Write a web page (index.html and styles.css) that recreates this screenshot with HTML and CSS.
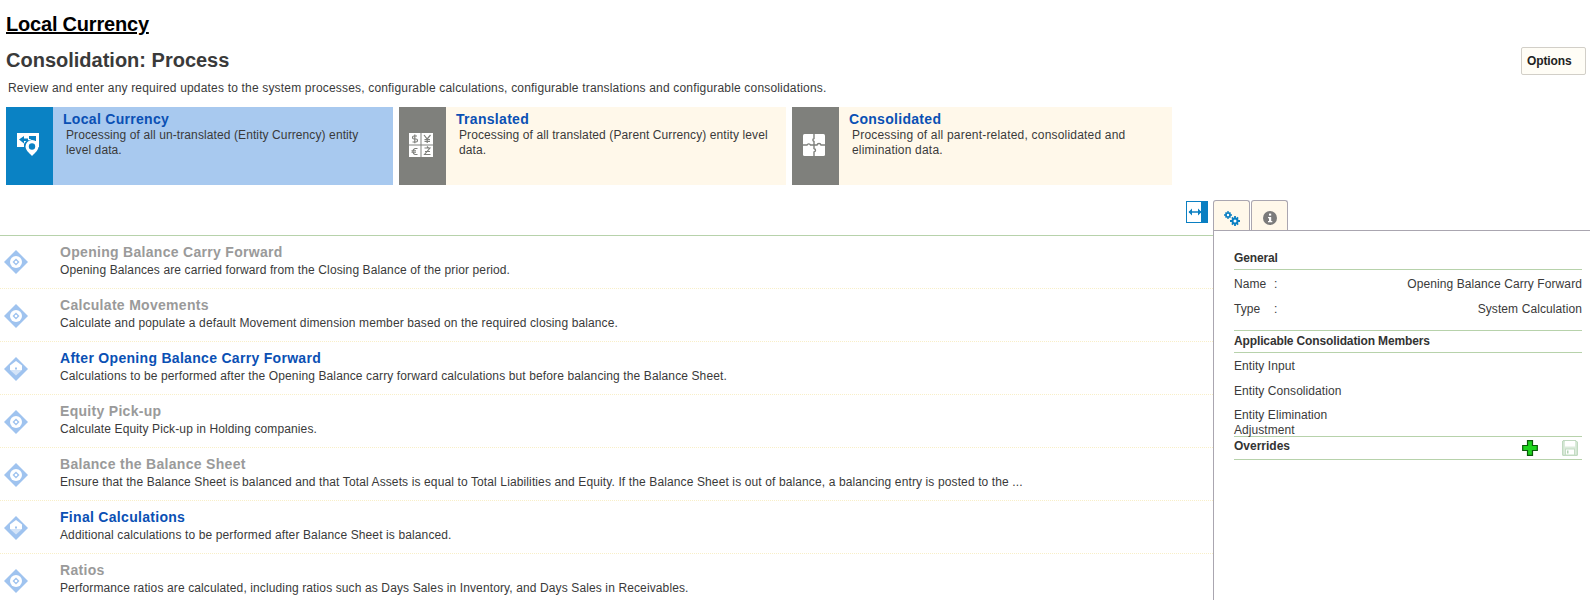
FILE: index.html
```html
<!DOCTYPE html>
<html lang="en">
<head>
<meta charset="utf-8">
<title>Local Currency</title>
<link rel="stylesheet" href="styles.css">
</head>
<body>
<svg class="defs" width="0" height="0" aria-hidden="true">
  <symbol id="dia-off" viewBox="0 0 24 24">
    <path d="M12 0 24 12 12 24 0 12Z" fill="#9fc3ef"/>
    <circle cx="12" cy="12" r="6" fill="#fff"/>
    <path d="M12 8.5 15.5 12 12 15.5 8.5 12Z" fill="#9fc3ef"/>
    <circle cx="12" cy="12" r="1.3" fill="#fff"/>
  </symbol>
  <symbol id="dia-on" viewBox="0 0 24 24">
    <path d="M12 0 24 12 12 24 0 12Z" fill="#9fc3ef"/>
    <path d="M12 4 18 8.5V13H6V8.5Z" fill="#fff"/>
    <path d="M6 13H18L12 18.5Z" fill="#d4e4f8"/>
    <rect x="11" y="10.5" width="2" height="2" fill="#9fc3ef"/>
  </symbol>
</svg>

<h1 class="page-title">Local Currency</h1>
<div class="head-row">
  <h2 class="section-title">Consolidation: Process</h2>
  <button class="options">Options</button>
</div>
<p class="intro">Review and enter any required updates to the system processes, configurable calculations, configurable translations and configurable consolidations.</p>

<div class="cards">
  <div class="card card-active">
    <div class="card-icon icon-blue">
      <svg width="22" height="23" viewBox="0 0 22 23">
        <path d="M0 0H22V14H19V11A6.5 6.5 0 0 0 7 11V14H0Z" fill="#fff"/>
        <path d="M2 6.5 7 3V5.5H11V8H7V10.5Z" fill="#0a82c4"/>
        <path d="M12 3H19V8H16L13 6H12Z" fill="#0a82c4"/>
        <path d="M15 7A6.5 6.5 0 0 1 21.500 13.500C21.500 17 18 20 15 23 12 20 8.500 17 8.500 13.500A6.500 6.500 0 0 1 15 7Z" fill="#fff"/>
        <circle cx="15" cy="13.500" r="3.200" fill="#0a82c4"/>
      </svg>
    </div>
    <div class="card-body">
      <div class="card-title">Local Currency</div>
      <div class="card-text w1">Processing of all un-translated (Entity Currency) entity level data.</div>
    </div>
  </div>
  <div class="card">
    <div class="card-icon icon-gray">
      <svg width="24" height="24" viewBox="0 0 24 24">
        <rect x="0" y="0" width="11.5" height="11.5" fill="#fff"/>
        <rect x="12.5" y="0" width="11.5" height="11.5" fill="#fff"/>
        <rect x="0" y="12.5" width="11.5" height="11.5" fill="#fff"/>
        <rect x="12.5" y="12.5" width="11.5" height="11.5" fill="#fff"/>
        <path d="M8 3H5A1.5 1.5 0 0 0 5 6H7A1.5 1.5 0 0 1 7 9H3.5M5.800 1.500V10.200" fill="none" stroke="#7f807c" stroke-width="1.200"/>
        <path d="M15 2 18.200 6 21.500 2M18.200 6V10M15.500 6.500H21M15.500 8.300H21" fill="none" stroke="#7f807c" stroke-width="1.200"/>
        <path d="M8.500 15.500H6A3.200 3.200 0 0 0 6 21.500H8.500M2.500 17.800H7M2.500 19.300H7" fill="none" stroke="#7f807c" stroke-width="1.100"/>
        <path d="M15.500 15H21L15.500 21.500H21.500M16 18.500H21M18 13.500 19.500 15" fill="none" stroke="#7f807c" stroke-width="1.100"/>
      </svg>
    </div>
    <div class="card-body">
      <div class="card-title">Translated</div>
      <div class="card-text w2">Processing of all translated (Parent Currency) entity level data.</div>
    </div>
  </div>
  <div class="card card-last">
    <div class="card-icon icon-gray">
      <svg width="22" height="22" viewBox="0 0 22 22">
        <rect width="22" height="22" rx="1.500" fill="#fff"/>
        <path d="M11 0V4.500C9.500 5 9.500 7 11 7.500V11M11 11H7.500C7 9.500 4.500 9.500 4 11H0M11 11H14C14.500 9 17.500 9 18 11H22M11 11V14.500C13 15 13 17.500 11 18V22" fill="none" stroke="#7f807c" stroke-width="1.400"/>
      </svg>
    </div>
    <div class="card-body">
      <div class="card-title">Consolidated</div>
      <div class="card-text w3">Processing of all parent-related, consolidated and elimination data.</div>
    </div>
  </div>
</div>

<div class="main">
  <div class="left">
    <div class="toolbar">
      <div class="toggle">
        <svg width="14" height="8" viewBox="0 0 14 8">
          <path d="M1 4H13" stroke="#0a7fc2" stroke-width="1.500"/>
          <path d="M4 0.500V7.500L0.500 4ZM10 0.500V7.500L13.500 4Z" fill="#0a7fc2"/>
        </svg>
      </div>
    </div>
    <ul class="rows">
      <li class="row row-first">
        <svg class="dia" width="24" height="24"><use href="#dia-off"/></svg>
        <div><div class="row-title off">Opening Balance Carry Forward</div>
        <div class="row-text">Opening Balances are carried forward from the Closing Balance of the prior period.</div></div>
      </li>
      <li class="row">
        <svg class="dia" width="24" height="24"><use href="#dia-off"/></svg>
        <div><div class="row-title off">Calculate Movements</div>
        <div class="row-text">Calculate and populate a default Movement dimension member based on the required closing balance.</div></div>
      </li>
      <li class="row">
        <svg class="dia" width="24" height="24"><use href="#dia-on"/></svg>
        <div><div class="row-title">After Opening Balance Carry Forward</div>
        <div class="row-text">Calculations to be performed after the Opening Balance carry forward calculations but before balancing the Balance Sheet.</div></div>
      </li>
      <li class="row">
        <svg class="dia" width="24" height="24"><use href="#dia-off"/></svg>
        <div><div class="row-title off">Equity Pick-up</div>
        <div class="row-text">Calculate Equity Pick-up in Holding companies.</div></div>
      </li>
      <li class="row">
        <svg class="dia" width="24" height="24"><use href="#dia-off"/></svg>
        <div><div class="row-title off">Balance the Balance Sheet</div>
        <div class="row-text">Ensure that the Balance Sheet is balanced and that Total Assets is equal to Total Liabilities and Equity. If the Balance Sheet is out of balance, a balancing entry is posted to the ...</div></div>
      </li>
      <li class="row">
        <svg class="dia" width="24" height="24"><use href="#dia-on"/></svg>
        <div><div class="row-title">Final Calculations</div>
        <div class="row-text">Additional calculations to be performed after Balance Sheet is balanced.</div></div>
      </li>
      <li class="row">
        <svg class="dia" width="24" height="24"><use href="#dia-off"/></svg>
        <div><div class="row-title off">Ratios</div>
        <div class="row-text">Performance ratios are calculated, including ratios such as Days Sales in Inventory, and Days Sales in Receivables.</div></div>
      </li>
    </ul>
  </div>

  <div class="right">
    <div class="tabs">
      <div class="tab">
        <svg width="16" height="15" viewBox="0 0 16 15">
          <g fill="#0a7fc2">
            <circle cx="4" cy="4" r="2.800"/>
            <path d="M3.300 0H4.700V8H3.300ZM0 3.300H8V4.700H0ZM1 2 2 1 7 6 6 7ZM6 1 7 2 2 7 1 6Z"/>
            <circle cx="11" cy="10" r="3.500"/>
            <path d="M10.100 5H11.900V15H10.100ZM6 9.100H16V10.900H6ZM7.300 7 8.500 5.800 14.700 13 13.500 14.200ZM13.500 5.800 14.700 7 8.500 14.200 7.300 13Z"/>
          </g>
          <circle cx="4" cy="4" r="1.200" fill="#fff"/>
          <circle cx="11" cy="10" r="1.500" fill="#fff"/>
        </svg>
      </div>
      <div class="tab">
        <svg width="14" height="14" viewBox="0 0 14 14">
          <circle cx="7" cy="7" r="7" fill="#7b7b7b"/>
          <rect x="6" y="2.600" width="2.200" height="2" fill="#fff"/>
          <path d="M5 6H8.200V10H9.300V11.200H5V10H6V7.200H5Z" fill="#fff"/>
        </svg>
      </div>
    </div>
    <div class="panel">
      <div class="panel-head first">General</div>
      <div class="prop"><span class="prop-key">Name</span><span class="prop-colon">:</span><span class="prop-val">Opening Balance Carry Forward</span></div>
      <div class="prop prop-2"><span class="prop-key">Type</span><span class="prop-colon">:</span><span class="prop-val">System Calculation</span></div>
      <div class="panel-head apps">Applicable Consolidation Members</div>
      <div class="member member-first">Entity Input</div>
      <div class="member">Entity Consolidation</div>
      <div class="member wrap">Entity Elimination Adjustment</div>
      <div class="panel-head overrides">
        <span>Overrides</span>
        <span class="actions">
          <svg width="16" height="16" viewBox="0 0 16 16">
            <path d="M5.500 0.700H10.500V5.500H15.300V10.500H10.500V15.300H5.500V10.500H0.700V5.500H5.500Z" fill="#1fd41f" stroke="#0a5c0a" stroke-width="1.200"/>
          </svg>
          <svg width="16" height="16" viewBox="0 0 16 16">
            <path d="M1 .7H14L15.300 2V15.300H.7V1Z" fill="#dcebdc" stroke="#b4d2b4"/>
            <rect x="3" y="1" width="10" height="5.500" fill="#fff"/>
            <rect x="3.500" y="9" width="9" height="6" fill="#fff" stroke="#c4dcc4"/>
            <rect x="5" y="10.500" width="1.500" height="3" fill="#b4d2b4"/>
          </svg>
        </span>
      </div>
    </div>
  </div>
</div>
</body>
</html>
```
FILE: styles.css
```css
* { box-sizing: border-box; }
html, body { margin: 0; padding: 0; height: 600px; overflow: hidden; background: #fff; }
body { font-family: "Liberation Sans", Arial, sans-serif; font-size: 12px; color: #3a3a3a; }
.defs { display: block; height: 0; }

.page-title { margin: 0; padding: 13px 0 0 6px; font-size: 20px; line-height: 23px; font-weight: 700; color: #000; text-decoration: underline; letter-spacing: -0.2px; }

.head-row { display: flex; justify-content: space-between; align-items: flex-start; padding: 10px 4px 0 6px; height: 49px; margin-top: -3px; }
.section-title { margin: 0; padding-top: 5px; font-size: 20px; line-height: 24px; font-weight: 700; color: #3a3a3a; }
.options { width: 65px; height: 28px; padding: 0 0 0 5px; margin-top: 4px; text-align: left; font: 700 12px "Liberation Sans", Arial, sans-serif; letter-spacing: -0.1px; color: #222; background: #fffdf6; border: 1px solid #d2cfc8; border-radius: 2px; }

.intro { margin: -1px 0 0; padding-left: 8px; line-height: 15px; letter-spacing: 0.18px; }

.cards { display: flex; gap: 6px; margin: 11px 0 0 6px; height: 78px; }
.card { display: flex; width: 387px; height: 78px; background: #fff8ea; }
.card-active { background: #a8c9ef; }
.card-last { width: 380px; }
.card-icon { flex: none; width: 47px; display: flex; align-items: center; justify-content: center; padding: 0 3px 3px 0; }
.icon-blue { background: #0a82c4; }
.icon-gray { background: #7f807c; }
.card-body { padding: 4px 0 0 10px; }
.card-title { font-size: 14px; line-height: 17px; font-weight: 700; color: #0a50b4; letter-spacing: 0.3px; }
.card-text { margin-left: 3px; line-height: 15px; color: #3a3a3a; letter-spacing: 0.1px; }
.w1 { width: 305px; }
.w2 { width: 320px; }
.w3 { width: 300px; letter-spacing: 0.2px; }

.main { display: flex; margin-top: 15px; }
.left { width: 1213px; flex: none; }
.toolbar { height: 36px; border-bottom: 1px solid #b7d2ab; display: flex; justify-content: flex-end; padding: 1px 5px 0 0; }
.toggle { width: 22px; height: 22px; background: linear-gradient(to right, #fff 0 14px, #0a7fc2 14px); border: 1px solid #0a7fc2; padding: 6px 0 0 1px; line-height: 0; }

.rows { list-style: none; margin: 0; padding: 0; }
.row { display: flex; align-items: flex-start; height: 53px; border-bottom: 1px dotted #f8efc8; padding-top: 7px; }
.dia { flex: none; width: 24px; height: 24px; margin: 8px 28px 0 4px; }
.row-first .dia { margin-top: 7px; }
.row-title { font-size: 14px; line-height: 18px; font-weight: 700; color: #0a50b4; margin-left: 4px; letter-spacing: 0.3px; }
.row-title.off { color: #9a9a9a; }
.row-text { line-height: 17px; margin: 1px 0 0 4px; white-space: nowrap; letter-spacing: 0.12px; }

.right { flex: 1; }
.tabs { display: flex; gap: 1px; height: 31px; border-bottom: 1px solid #aaa6b0; }
.tab { width: 37px; height: 30px; background: #fff8ea; border: 1px solid #aaa6b0; border-bottom: 0; border-radius: 3px 3px 0 0; display: flex; align-items: center; justify-content: center; padding-top: 5px; }
.panel { height: 370px; border-left: 1px solid #aaa6b0; padding: 16px 8px 0 20px; }
.panel-head { font-weight: 700; line-height: 15px; color: #333; border-bottom: 1px solid #b7d2ab; letter-spacing: -0.13px; }
.first { padding: 4px 0 4px; height: 23px; }
.prop { display: flex; line-height: 15px; margin-top: 7px; letter-spacing: 0.09px; }
.prop-2 { margin-top: 10px; }
.prop-key { width: 40px; }
.prop-colon { width: 20px; }
.prop-val { flex: 1; text-align: right; }
.apps { border-top: 1px solid #b7d2ab; margin-top: 13px; padding: 3px 0 3px; height: 23px; }
.member { line-height: 15px; margin-top: 10px; width: 130px; letter-spacing: 0.07px; }
.member-first { margin-top: 6px; }
.wrap { margin-top: 9px; height: 28px; }
.overrides { display: flex; justify-content: space-between; align-items: center; height: 24px; padding-bottom: 3px; border-top: 1px solid #b7d2ab; letter-spacing: 0; }
.actions { display: flex; gap: 24px; margin-right: 4px; padding-top: 3px; }
.actions svg { display: block; }
```
